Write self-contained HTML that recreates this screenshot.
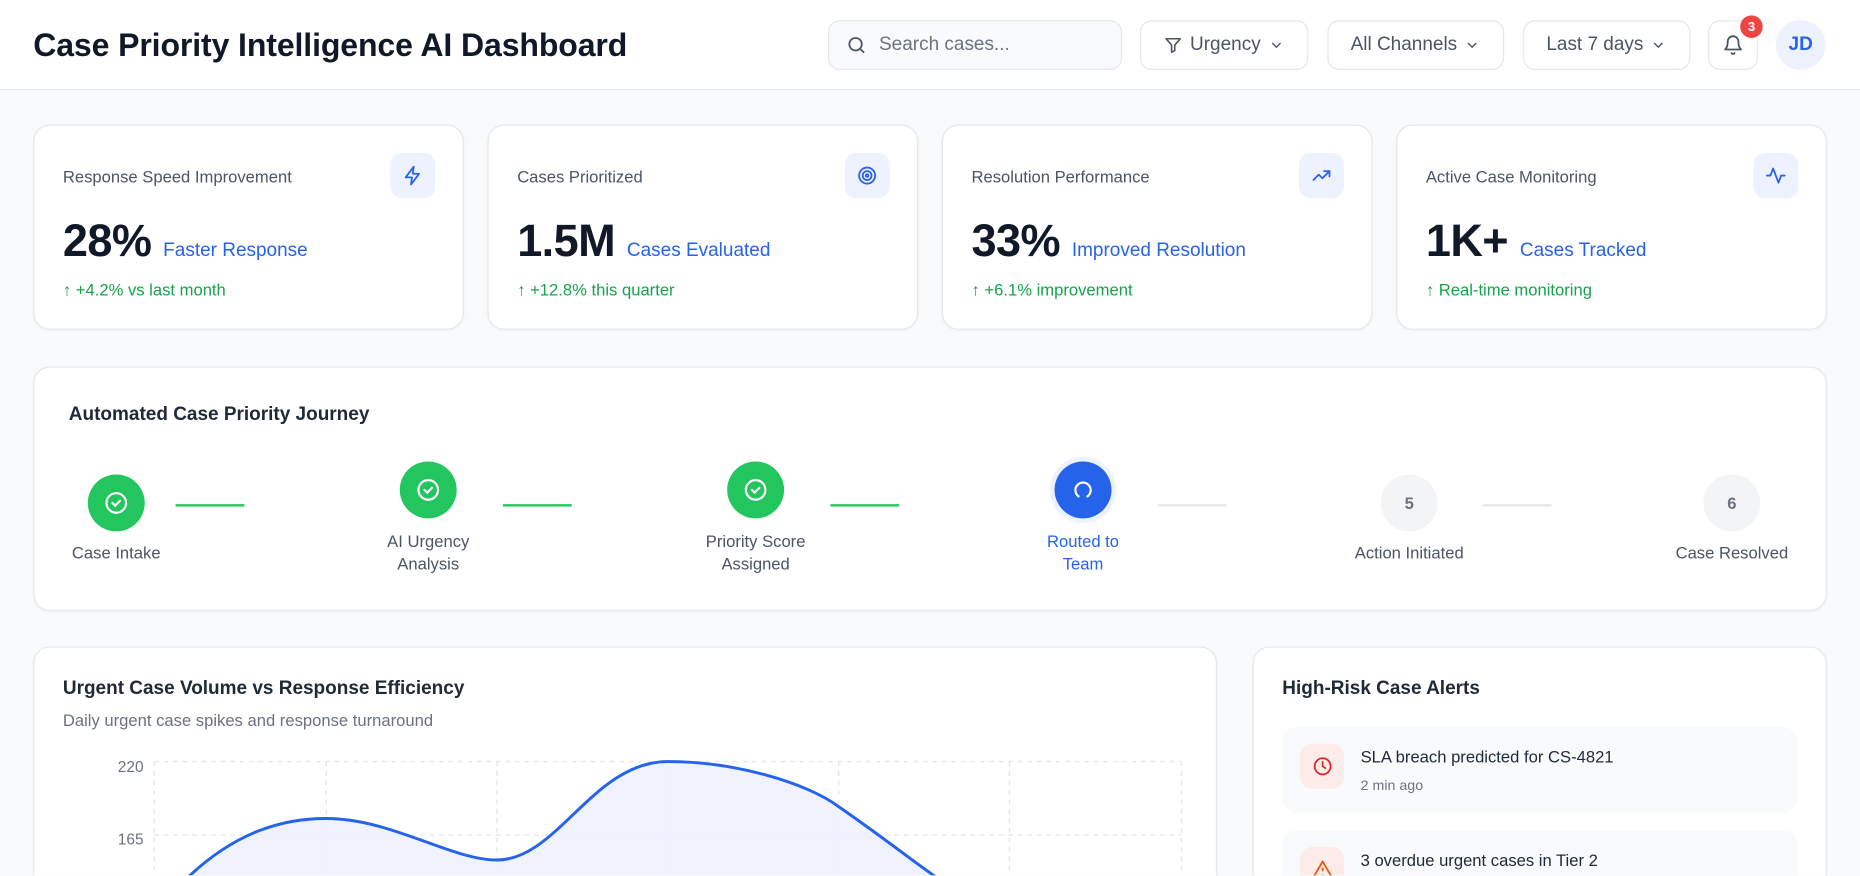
<!DOCTYPE html>
<html><head><meta charset="utf-8"><style>
*{box-sizing:border-box;margin:0;padding:0}
html,body{width:1860px;height:876px;overflow:hidden;background:#f9fafb;font-family:"Liberation Sans",sans-serif;color:#111827}
#w{position:absolute;left:0;top:0;width:1568px;height:738px;transform:scale(1.18622);transform-origin:0 0;background:#f9fafb;overflow:hidden}
.a{position:absolute}
.hdr{left:0;top:0;width:1568px;height:76px;background:#fff;border-bottom:1px solid #e5e7eb}
.btn{position:absolute;top:17px;height:42px;border:1px solid #e5e7eb;border-radius:10px;background:#fff;font-size:16px;color:#4b5563;display:flex;align-items:center;justify-content:center;gap:6px}
.card{position:absolute;background:#fff;border:1px solid #e5e7eb;border-radius:14px;box-shadow:0 1px 2px rgba(0,0,0,.04)}
.lbl{position:absolute;left:24px;top:35px;font-size:14px;color:#4b5563}
.ib{position:absolute;right:23px;top:23px;width:38px;height:38px;border-radius:10px;background:#eef2ff;display:flex;align-items:center;justify-content:center}
.big{position:absolute;left:24px;top:77px;font-size:38px;font-weight:bold;color:#111827;white-space:nowrap;letter-spacing:-0.5px}
.big span{font-size:16px;font-weight:normal;color:#2563eb;margin-left:10px;letter-spacing:0}
.gr{position:absolute;left:24px;top:130px;font-size:14px;color:#16a34a}
.st{position:absolute;width:48px;height:48px;border-radius:50%;display:flex;align-items:center;justify-content:center}
.sl{position:absolute;width:140px;text-align:center;font-size:14px;line-height:19px;color:#4b5563}
.ln{position:absolute;height:2px;width:58px;background:#22c55e}
</style></head><body><div id="w">
<div class="a hdr"></div>
<div class="a" style="left:28px;top:23px;font-size:27px;font-weight:bold;letter-spacing:-0.1px">Case Priority Intelligence AI Dashboard</div>
<div class="btn" style="left:698px;width:248px;background:#f9fafb;justify-content:flex-start;padding-left:14px;gap:10px;color:#6b7280">
<svg width="18" height="18" viewBox="0 0 24 24" fill="none" stroke="#4b5563" stroke-width="2" stroke-linecap="round"><circle cx="11" cy="11" r="7"/><path d="M20 20l-4-4"/></svg>Search cases...</div>
<div class="btn" style="left:961px;width:142px"><svg width="16" height="16" viewBox="0 0 24 24" fill="none" stroke="#4b5563" stroke-width="2" stroke-linejoin="round"><path d="M3 4h18l-7 8v7l-4 2v-9z"/></svg>Urgency<svg width="14" height="14" viewBox="0 0 24 24" fill="none" stroke="#4b5563" stroke-width="2"><path d="M6 9l6 6 6-6"/></svg></div>
<div class="btn" style="left:1119px;width:149px">All Channels<svg width="14" height="14" viewBox="0 0 24 24" fill="none" stroke="#4b5563" stroke-width="2"><path d="M6 9l6 6 6-6"/></svg></div>
<div class="btn" style="left:1284px;width:141px">Last 7 days<svg width="14" height="14" viewBox="0 0 24 24" fill="none" stroke="#4b5563" stroke-width="2"><path d="M6 9l6 6 6-6"/></svg></div>
<div class="btn" style="left:1440px;width:42px"><svg width="18" height="18" viewBox="0 0 24 24" fill="none" stroke="#4b5563" stroke-width="2" stroke-linecap="round" stroke-linejoin="round"><path d="M6 8a6 6 0 0112 0c0 7 3 9 3 9H3s3-2 3-9"/><path d="M10.3 21a1.9 1.9 0 003.4 0"/></svg></div>
<div class="a" style="left:1467px;top:13px;width:19px;height:19px;border-radius:50%;background:#ef4444;color:#fff;font-size:11px;font-weight:bold;display:flex;align-items:center;justify-content:center">3</div>
<div class="a" style="left:1497px;top:17px;width:42px;height:42px;border-radius:50%;background:#eef2ff;color:#2563eb;font-weight:bold;font-size:16px;display:flex;align-items:center;justify-content:center">JD</div>

<div class="card" style="left:28px;top:105px;width:363px;height:173px"><div class="lbl">Response Speed Improvement</div><div class="ib"><svg width="18" height="18" viewBox="0 0 24 24" fill="none" stroke="#2563eb" stroke-width="2" stroke-linejoin="round"><path d="M13 2L4 14h7l-1 8 9-12h-7z"/></svg></div><div class="big">28%<span>Faster Response</span></div><div class="gr">↑ +4.2% vs last month</div></div>
<div class="card" style="left:411px;top:105px;width:363px;height:173px"><div class="lbl">Cases Prioritized</div><div class="ib"><svg width="18" height="18" viewBox="0 0 24 24" fill="none" stroke="#2563eb" stroke-width="2"><circle cx="12" cy="12" r="9"/><circle cx="12" cy="12" r="5"/><circle cx="12" cy="12" r="1.5"/></svg></div><div class="big">1.5M<span>Cases Evaluated</span></div><div class="gr">↑ +12.8% this quarter</div></div>
<div class="card" style="left:794px;top:105px;width:363px;height:173px"><div class="lbl">Resolution Performance</div><div class="ib"><svg width="18" height="18" viewBox="0 0 24 24" fill="none" stroke="#2563eb" stroke-width="2" stroke-linecap="round" stroke-linejoin="round"><path d="M3 17l6-6 4 4 8-8"/><path d="M15 7h6v6"/></svg></div><div class="big">33%<span>Improved Resolution</span></div><div class="gr">↑ +6.1% improvement</div></div>
<div class="card" style="left:1177px;top:105px;width:363px;height:173px"><div class="lbl">Active Case Monitoring</div><div class="ib"><svg width="18" height="18" viewBox="0 0 24 24" fill="none" stroke="#2563eb" stroke-width="2" stroke-linecap="round" stroke-linejoin="round"><path d="M2 12h4l3-8 6 16 3-8h4"/></svg></div><div class="big">1K+<span>Cases Tracked</span></div><div class="gr">↑ Real-time monitoring</div></div>

<div class="card" style="left:28px;top:309px;width:1512px;height:206px"></div>
<div class="a" style="left:58px;top:341px;font-size:16px;font-weight:bold;color:#1f2937">Automated Case Priority Journey</div>
<div class="st" style="left:74px;top:400px;background:#22c55e"><svg width="22" height="22" viewBox="0 0 24 24" fill="none" stroke="#fff" stroke-width="2" stroke-linecap="round"><circle cx="12" cy="12" r="9"/><path d="M8.5 12l2.5 2.5 4.5-4.5"/></svg></div>
<div class="sl" style="left:28px;top:457px">Case Intake</div>
<div class="ln" style="left:148px;top:425px"></div>
<div class="st" style="left:337px;top:389px;background:#22c55e"><svg width="22" height="22" viewBox="0 0 24 24" fill="none" stroke="#fff" stroke-width="2" stroke-linecap="round"><circle cx="12" cy="12" r="9"/><path d="M8.5 12l2.5 2.5 4.5-4.5"/></svg></div>
<div class="sl" style="left:291px;top:447px">AI Urgency<br>Analysis</div>
<div class="ln" style="left:424px;top:425px"></div>
<div class="st" style="left:613px;top:389px;background:#22c55e"><svg width="22" height="22" viewBox="0 0 24 24" fill="none" stroke="#fff" stroke-width="2" stroke-linecap="round"><circle cx="12" cy="12" r="9"/><path d="M8.5 12l2.5 2.5 4.5-4.5"/></svg></div>
<div class="sl" style="left:567px;top:447px">Priority Score<br>Assigned</div>
<div class="ln" style="left:700px;top:425px"></div>
<div class="st" style="left:889px;top:389px;background:#2563eb;box-shadow:0 0 0 4px #eef2ff"><svg width="22" height="22" viewBox="0 0 24 24" fill="none" stroke="#fff" stroke-width="2" stroke-linecap="round"><path d="M8 18A7 7 0 1116 18"/></svg></div>
<div class="sl" style="left:843px;top:447px;color:#2563eb">Routed to<br>Team</div>
<div class="ln" style="left:976px;top:425px;background:#e5e7eb"></div>
<div class="st" style="left:1164px;top:400px;background:#f3f4f6;color:#6b7280;font-size:14px;font-weight:bold">5</div>
<div class="sl" style="left:1118px;top:457px">Action Initiated</div>
<div class="ln" style="left:1250px;top:425px;background:#e5e7eb"></div>
<div class="st" style="left:1436px;top:400px;background:#f3f4f6;color:#6b7280;font-size:14px;font-weight:bold">6</div>
<div class="sl" style="left:1390px;top:457px">Case Resolved</div>

<div class="card" style="left:28px;top:545px;width:998px;height:260px"></div>
<div class="a" style="left:53px;top:572px;font-size:16px;font-weight:bold;color:#1f2937">Urgent Case Volume vs Response Efficiency</div>
<div class="a" style="left:53px;top:599px;font-size:14px;color:#6b7280">Daily urgent case spikes and response turnaround</div>
<div class="a" style="left:80px;top:639px;width:41px;text-align:right;font-size:13px;color:#6b7280">220</div>
<div class="a" style="left:80px;top:700px;width:41px;text-align:right;font-size:13px;color:#6b7280">165</div>
<svg class="a" style="left:0;top:0" width="1040" height="738">
<g stroke="#e5e7eb" stroke-dasharray="4 4" stroke-width="1.2">
<path d="M130 642H996M130 704H996"/>
<path d="M130 642V738M275 642V738M419 642V738M563 642V738M707 642V738M851 642V738M996 642V738"/></g>
<path d="M158 740 C200 700,240 690,275 690 C330 690,380 725,419 725 C470 725,500 642,563 642 C620 642,680 660,707 680 C750 710,775 730,790 740 Z" fill="#eef2ff" opacity=".9"/>
<path d="M158 740 C200 700,240 690,275 690 C330 690,380 725,419 725 C470 725,500 642,563 642 C620 642,680 660,707 680 C750 710,775 730,790 740" fill="none" stroke="#2563eb" stroke-width="2.5"/>
</svg>

<div class="card" style="left:1056px;top:545px;width:484px;height:260px"></div>
<div class="a" style="left:1081px;top:572px;font-size:16px;font-weight:bold;color:#1f2937">High-Risk Case Alerts</div>
<div class="a" style="left:1081px;top:613px;width:434px;height:72px;border-radius:12px;background:#f9fafb"></div>
<div class="a" style="left:1096px;top:627px;width:37px;height:38px;border-radius:10px;background:#fdecea;display:flex;align-items:center;justify-content:center"><svg width="18" height="18" viewBox="0 0 24 24" fill="none" stroke="#dc2626" stroke-width="2" stroke-linecap="round"><circle cx="12" cy="12" r="9"/><path d="M12 7v5l3 2"/></svg></div>
<div class="a" style="left:1147px;top:630px;font-size:14px;color:#1f2937">SLA breach predicted for CS-4821</div>
<div class="a" style="left:1147px;top:655px;font-size:12px;color:#6b7280">2 min ago</div>
<div class="a" style="left:1081px;top:700px;width:434px;height:72px;border-radius:12px;background:#f9fafb"></div>
<div class="a" style="left:1096px;top:714px;width:37px;height:38px;border-radius:10px;background:#fdecea;display:flex;align-items:center;justify-content:center"><svg width="18" height="18" viewBox="0 0 24 24" fill="none" stroke="#ea580c" stroke-width="2" stroke-linejoin="round"><path d="M12 3L2 20h20z"/><path d="M12 10v4M12 17v.5"/></svg></div>
<div class="a" style="left:1147px;top:717px;font-size:14px;color:#1f2937">3 overdue urgent cases in Tier 2</div>
</div></body></html>
